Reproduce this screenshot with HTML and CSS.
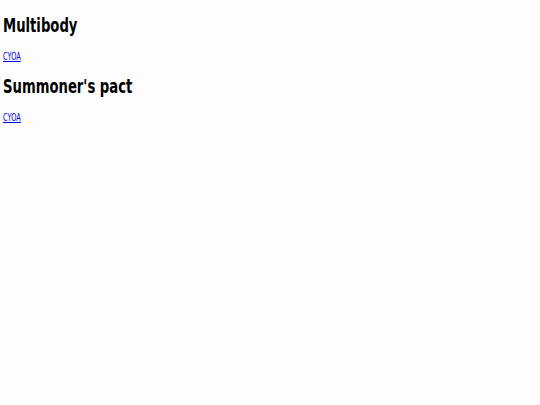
FILE: index.html
```html
<!DOCTYPE html>
<html lang="en">
<head>
    <meta charset="UTF-8">
    <meta name="viewport" content="width=device-width, initial-scale=1.0">
    <title>Stories</title>
    <link rel="stylesheet" href="styles.css">
</head>
<body>
    <div class="stories">
        <div class="story">
            <h2>Multibody</h2>
            <div class="tags"><a href="#">CYOA</a></div>
        </div>
        <div class="story">
            <h2>Summoner's pact</h2>
            <div class="tags"><a href="#">CYOA</a></div>
        </div>
    </div>
</body>
</html>
```
FILE: styles.css
```css
/* Page */
body {
    margin: 0;
    padding: 2px 3px 0;
    font-family: "DejaVu Sans", sans-serif;
    background-color: #fdfdfd;
    color: #000;
}

/* narrow text, as on the original list page */
.stories {
    transform: scaleX(0.66);
    transform-origin: left top;
}

/* Story entries */
.story h2 {
    font-size: 20px;
    line-height: 23px;
    margin: 12px 0 14px;
}

.story .tags {
    font-size: 10px;
    line-height: 12px;
    margin-bottom: 12px;
}

.story a {
    color: #0000ee;
}
```
